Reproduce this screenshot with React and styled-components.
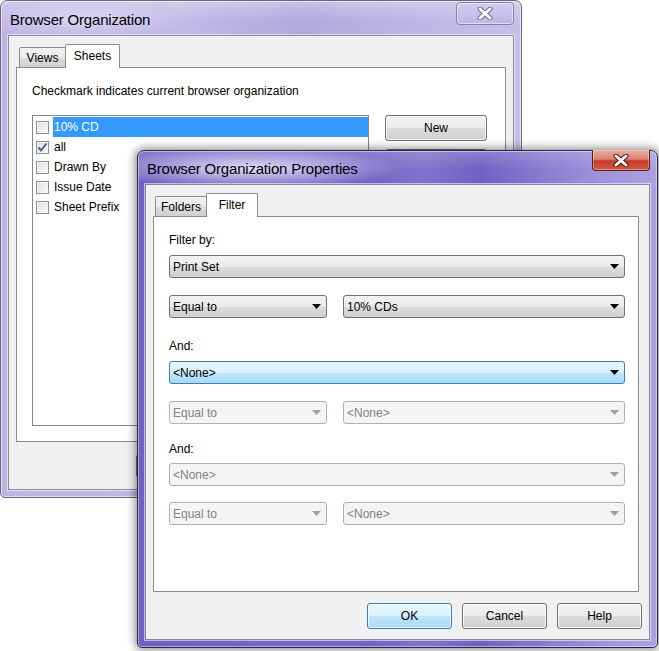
import React from 'react'
import styled, { createGlobalStyle, css } from 'styled-components'

const GlobalStyle = createGlobalStyle`
  html, body {
    margin: 0;
    padding: 0;
    background: #ffffff;
  }
  body {
    font-family: "Liberation Sans", Arial, sans-serif;
    font-size: 12px;
    color: #000000;
  }
`

const Desktop = styled.div`
  position: relative;
  width: 659px;
  height: 651px;
  overflow: hidden;
  background: #ffffff;
`

// windows sit on the desktop at their own place, so they are placed absolutely
const Window = styled.div`
  position: absolute;
  left: ${p => p.$left}px;
  top: ${p => p.$top}px;
  width: ${p => p.$width}px;
  height: ${p => p.$height}px;
  box-sizing: border-box;
  display: flex;
  flex-direction: column;
  padding: 0 7px 7px 7px;
  border-radius: 7px 7px 5px 5px;
  ${p => p.$active ? css`
    border: 1px solid #2a2648;
    background: linear-gradient(90deg, #6f5fc0 0%, #7867c6 30%, #7564c5 45%, #8372cc 55%, #7160c2 66%, #8d7fd2 80%, #a398de 92%, #aba1e1 100%);
    box-shadow: 0 0 9px 2px rgba(0, 0, 0, 0.45), inset 0 0 0 1px rgba(255, 255, 255, 0.45);
    z-index: 2;
  ` : css`
    border: 1px solid #6a6780;
    background: linear-gradient(90deg, #bdb4e3 0%, #c2b9e6 35%, #b2a7de 58%, #bcb3e3 75%, #c7bfe8 100%);
    box-shadow: inset 0 0 0 1px rgba(255, 255, 255, 0.55);
    z-index: 1;
  `}
`

const TitleBar = styled.div`
  height: ${p => p.$height}px;
  flex: none;
  display: flex;
  align-items: center;
  justify-content: space-between;
  margin: 0 -7px 0 -7px;
  padding: 0 7px 0 9px;
  border-radius: 6px 6px 0 0;
  background: ${p => p.$active
    ? 'radial-gradient(ellipse 155px 20px at 112px 52%, rgba(236, 232, 252, 0.92), rgba(236, 232, 252, 0) 100%), linear-gradient(180deg, rgba(255,255,255,0.18), rgba(255,255,255,0) 60%)'
    : 'radial-gradient(ellipse 110px 18px at 80px 55%, rgba(236, 232, 252, 0.6), rgba(236, 232, 252, 0) 100%), linear-gradient(180deg, rgba(255,255,255,0.3), rgba(255,255,255,0) 60%)'};
`

const TitleText = styled.span`
  font-size: 15px;
  color: #000000;
  padding-top: 2px;
  letter-spacing: -0.2px;
`

const CloseButton = styled.div`
  align-self: flex-start;
  width: 58px;
  height: ${p => p.$active ? 21 : 23}px;
  margin-top: ${p => p.$active ? -1 : 1}px;
  box-sizing: border-box;
  display: flex;
  align-items: center;
  justify-content: center;
  border-radius: 0 0 4px 4px;
  ${p => p.$active ? css`
    border: 1px solid #5a1f1c;
    border-top: none;
    background: linear-gradient(180deg, #e9a99c 0%, #dc8474 45%, #c5392a 55%, #d65a40 100%);
    box-shadow: inset 0 0 0 1px rgba(255, 255, 255, 0.35);
  ` : css`
    border: 1px solid #8780ad;
    border-radius: 4px;
    background: linear-gradient(180deg, #d3cdee 0%, #c8c1ea 50%, #beb6e4 100%);
    box-shadow: inset 0 0 0 1px rgba(255, 255, 255, 0.5);
  `}
`

const Client = styled.div`
  flex: 1;
  display: flex;
  flex-direction: column;
  background: #f0f0f0;
  border: 1px solid #8a8a9e;
  box-shadow: 0 0 0 1px rgba(255, 255, 255, 0.55);
  padding: ${p => p.$pad};
  min-height: 0;
`

const TabStrip = styled.div`
  display: flex;
  align-items: flex-end;
  height: 23px;
  padding-left: ${p => p.$indent}px;
  position: relative;
  z-index: 1;
`

const Tab = styled.div`
  box-sizing: border-box;
  width: ${p => p.$width}px;
  display: flex;
  align-items: center;
  justify-content: center;
  border: 1px solid #898c95;
  border-bottom: none;
  border-radius: 2px 2px 0 0;
  ${p => p.$selected ? css`
    height: 24px;
    margin-bottom: -1px;
    margin-left: -1px;
    background: #ffffff;
    padding-bottom: 2px;
  ` : css`
    height: 20px;
    background: linear-gradient(180deg, #f2f2f2 0%, #ebebeb 50%, #dddddd 51%, #cfcfcf 100%);
    padding-top: 1px;
  `}
`

const TabPanel = styled.div`
  flex: 1;
  display: flex;
  flex-direction: column;
  background: #ffffff;
  border: 1px solid #898c95;
  margin: ${p => p.$margin};
  padding: ${p => p.$pad};
  min-height: 0;
`

const Caption = styled.div`
  line-height: 15px;
  height: 15px;
  margin-top: ${p => p.$top || 0}px;
`

const SheetsBody = styled.div`
  display: flex;
  margin-top: 16px;
  gap: 16px;
`

const ListBox = styled.div`
  box-sizing: border-box;
  width: 337px;
  height: 311px;
  border: 1px solid #828790;
  background: #ffffff;
  padding: 1px 0 0 2px;
  display: flex;
  flex-direction: column;
`

const ListRow = styled.div`
  display: flex;
  align-items: center;
  height: 20px;
`

const RowLabel = styled.span`
  flex: 1;
  height: 20px;
  line-height: 20px;
  margin-left: 4px;
  padding-left: 1px;
  ${p => p.$selected && css`
    background: #3399ff;
    color: #ffffff;
  `}
`

const CheckBox = styled.span`
  box-sizing: border-box;
  width: 13px;
  height: 13px;
  flex: none;
  margin-left: 1px;
  border: 1px solid #8e8f8f;
  background: linear-gradient(135deg, #dcdcdc 0%, #f0f0f0 60%, #fbfbfb 100%);
  box-shadow: inset 0 0 0 1px #f4f4f4;
  display: flex;
  align-items: center;
  justify-content: center;
`

const ButtonColumn = styled.div`
  display: flex;
  flex-direction: column;
  gap: 8px;
`

const PushButton = styled.div`
  box-sizing: border-box;
  width: ${p => p.$width}px;
  height: ${p => p.$height}px;
  flex: none;
  display: flex;
  align-items: center;
  justify-content: center;
  border-radius: 3px;
  color: #000000;
  ${p => p.$default ? css`
    border: 1px solid #3c7fb1;
    background: linear-gradient(180deg, #eaf6fd 0%, #d9f0fc 50%, #bee6fd 51%, #a7d9f5 100%);
    box-shadow: inset 0 0 0 1px rgba(255, 255, 255, 0.7);
  ` : css`
    border: 1px solid #707070;
    background: linear-gradient(180deg, #f2f2f2 0%, #ebebeb 50%, #dddddd 51%, #cfcfcf 100%);
    box-shadow: inset 0 0 0 1px rgba(255, 255, 255, 0.75);
  `}
`

const ButtonRow = styled.div`
  display: flex;
  justify-content: flex-end;
  gap: ${p => p.$gap}px;
  margin-top: ${p => p.$top}px;
  padding-right: ${p => p.$right}px;
`

const ComboRow = styled.div`
  display: flex;
  gap: 16px;
  margin-top: ${p => p.$top ?? 17}px;
`

const Combo = styled.div`
  box-sizing: border-box;
  height: 23px;
  width: ${p => p.$width ? `${p.$width}px` : 'auto'};
  flex: ${p => p.$grow ? '1' : 'none'};
  margin-top: ${p => p.$top || 0}px;
  display: flex;
  align-items: center;
  justify-content: space-between;
  padding: 0 5px 0 3px;
  border-radius: 3px;
  ${p => p.$variant === 'hot' ? css`
    border: 1px solid #3c7fb1;
    background: linear-gradient(180deg, #eaf6fd 0%, #d9f0fc 50%, #bee6fd 51%, #a7d9f5 100%);
    color: #000000;
  ` : p.$variant === 'disabled' ? css`
    border: 1px solid #adb2b5;
    background: #f4f4f4;
    color: #838383;
  ` : css`
    border: 1px solid #707070;
    background: linear-gradient(180deg, #f2f2f2 0%, #ebebeb 50%, #dddddd 51%, #cfcfcf 100%);
    color: #000000;
  `}
`

const CloseGlyph = ({ active }) => (
  <svg width="16" height="13" viewBox="0 0 16 13">
    <path d="M3 2 L13 11 M13 2 L3 11" stroke={active ? '#4a1410' : '#6d6890'} strokeWidth="5" strokeLinecap="round" />
    <path d="M3 2 L13 11 M13 2 L3 11" stroke="#ffffff" strokeWidth="3" strokeLinecap="round" />
  </svg>
)

const Arrow = ({ disabled }) => (
  <svg width="9" height="5" viewBox="0 0 9 5">
    <polygon points="0,0 9,0 4.5,5" fill={disabled ? '#a0a0a0' : '#000000'} />
  </svg>
)

const Check = () => (
  <svg width="11" height="11" viewBox="0 0 11 11">
    <path d="M1.5 5.5 L4 8.5 L9.5 1.5" stroke="#4c5f94" strokeWidth="2" fill="none" />
  </svg>
)

const DropDown = ({ value, variant = 'normal', width, top, grow }) => (
  <Combo $variant={variant} $width={width} $top={top} $grow={grow}>
    <span>{value}</span>
    <Arrow disabled={variant === 'disabled'} />
  </Combo>
)

const sheets = [
  { name: '10% CD', checked: false, selected: true },
  { name: 'all', checked: true },
  { name: 'Drawn By', checked: false },
  { name: 'Issue Date', checked: false },
  { name: 'Sheet Prefix', checked: false },
]

function BrowserOrganization() {
  return (
    <Window $left={0} $top={0} $width={522} $height={498}>
      <TitleBar $height={34}>
        <TitleText>Browser Organization</TitleText>
        <CloseButton>
          <CloseGlyph />
        </CloseButton>
      </TitleBar>
      <Client $pad="8px 0 11px 0">
        <TabStrip $indent={10}>
          <Tab $width={47}>Views</Tab>
          <Tab $width={55} $selected>Sheets</Tab>
        </TabStrip>
        <TabPanel $margin="0 7px 0 7px" $pad="16px 15px">
          <Caption>Checkmark indicates current browser organization</Caption>
          <SheetsBody>
            <ListBox>
              {sheets.map(s => (
                <ListRow key={s.name}>
                  <CheckBox>{s.checked && <Check />}</CheckBox>
                  <RowLabel $selected={s.selected}>{s.name}</RowLabel>
                </ListRow>
              ))}
            </ListBox>
            {/* the rest of this column lies under the front dialog */}
            <ButtonColumn>
              <PushButton $width={102} $height={26}>New</PushButton>
              <PushButton $width={102} $height={26} />
              <PushButton $width={102} $height={26} />
            </ButtonColumn>
          </SheetsBody>
        </TabPanel>
        <ButtonRow $gap={10} $top={12} $right={7}>
          <PushButton $width={85} $height={24} />
          <PushButton $width={85} $height={24} />
          <PushButton $width={85} $height={24} />
          <PushButton $width={85} $height={24} />
        </ButtonRow>
      </Client>
    </Window>
  )
}

function OrganizationProperties() {
  return (
    <Window $left={137} $top={150} $width={521} $height={498} $active>
      <TitleBar $height={33} $active>
        <TitleText>Browser Organization Properties</TitleText>
        <CloseButton $active>
          <CloseGlyph active />
        </CloseButton>
      </TitleBar>
      <Client $pad="8px 0 10px 0">
        <TabStrip $indent={9}>
          <Tab $width={52}>Folders</Tab>
          <Tab $width={52} $selected>Filter</Tab>
        </TabStrip>
        <TabPanel $margin="0 10px 0 7px" $pad="16px 13px 0 15px">
          <Caption>Filter by:</Caption>
          <DropDown value="Print Set" top={7} />
          <ComboRow>
            <DropDown value="Equal to" width={158} />
            <DropDown value="10% CDs" grow />
          </ComboRow>
          <Caption $top={21}>And:</Caption>
          <DropDown value="<None>" variant="hot" top={7} />
          <ComboRow>
            <DropDown value="Equal to" width={158} variant="disabled" />
            <DropDown value="<None>" variant="disabled" grow />
          </ComboRow>
          <Caption $top={18}>And:</Caption>
          <DropDown value="<None>" variant="disabled" top={6} />
          <ComboRow $top={16}>
            <DropDown value="Equal to" width={158} variant="disabled" />
            <DropDown value="<None>" variant="disabled" grow />
          </ComboRow>
        </TabPanel>
        <ButtonRow $gap={10} $top={11} $right={7}>
          <PushButton $width={85} $height={26} $default>OK</PushButton>
          <PushButton $width={85} $height={26}>Cancel</PushButton>
          <PushButton $width={85} $height={26}>Help</PushButton>
        </ButtonRow>
      </Client>
    </Window>
  )
}

export default function App() {
  return (
    <>
      <GlobalStyle />
      <Desktop>
        <BrowserOrganization />
        <OrganizationProperties />
      </Desktop>
    </>
  )
}
